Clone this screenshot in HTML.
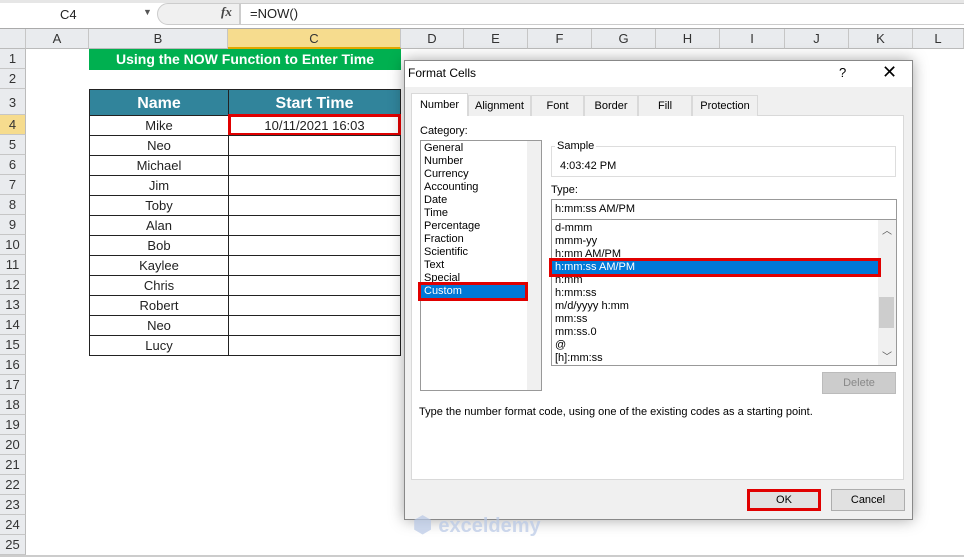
<!DOCTYPE html>
<html><head><meta charset="utf-8"><style>
*{margin:0;padding:0;box-sizing:border-box}
body{width:964px;height:557px;overflow:hidden;background:#fff;font-family:"Liberation Sans",sans-serif;position:relative;font-size:13px;color:#222}
.a{position:absolute}
.ch{position:absolute;top:29px;height:20px;background:#e9ebee;border-right:1px solid #c6c6c6;border-bottom:1px solid #bbb;text-align:center;line-height:20px;font-size:13px;color:#333}
.rh{position:absolute;left:0;width:26px;background:#e9ebee;border-bottom:1px solid #c6c6c6;border-right:1px solid #bbb;text-align:center;font-size:13px;color:#333}
.cell{position:absolute;border:1px solid #222;text-align:center;font-size:13px;line-height:19px}
.dlg{font-family:"Liberation Sans",sans-serif;font-size:11px;color:#000}
.tab{position:absolute;top:95px;height:21px;border:1px solid #d9d9d9;border-bottom:none;background:#f0f0f0;text-align:center;line-height:20px;font-size:11px}
.li{height:13px;line-height:13px;padding-left:3px;font-size:11px;white-space:nowrap}
</style></head><body>
<div class="a" style="left:0;top:0;width:964px;height:28px;background:#fff;border-bottom:1px solid #aaa"></div>
<div class="a" style="left:0;top:0;width:964px;height:3px;background:#e6e6e6"></div>
<div class="a" style="left:60px;top:7px;font-size:13px">C4</div>
<div class="a" style="left:143px;top:7px;font-size:9px;color:#555">▼</div>
<div class="a" style="left:157px;top:3px;width:83px;height:22px;background:#f0f0f0;border:1px solid #ccc;border-radius:11px 0 0 11px"></div>
<div class="a" style="left:221px;top:4px;font-family:'Liberation Serif',serif;font-style:italic;font-size:13px;font-weight:bold;color:#444">fx</div>
<div class="a" style="left:240px;top:3px;width:724px;height:22px;border:1px solid #ccc;border-right:none;background:#fff"></div>
<div class="a" style="left:250px;top:6px;font-size:13px">=NOW()</div>
<div class="a" style="left:0;top:25px;width:964px;height:4px;background:#fff;border-bottom:1px solid #aaa"></div>
<div class="ch" style="left:0;width:26px"></div>
<div class="ch" style="left:26px;width:63px">A</div>
<div class="ch" style="left:89px;width:139px">B</div>
<div class="ch" style="left:228px;width:173px;background:#f6dc8e;border-bottom:2px solid #e0a800">C</div>
<div class="ch" style="left:401px;width:63px">D</div>
<div class="ch" style="left:464px;width:64px">E</div>
<div class="ch" style="left:528px;width:64px">F</div>
<div class="ch" style="left:592px;width:64px">G</div>
<div class="ch" style="left:656px;width:64px">H</div>
<div class="ch" style="left:720px;width:65px">I</div>
<div class="ch" style="left:785px;width:64px">J</div>
<div class="ch" style="left:849px;width:64px">K</div>
<div class="ch" style="left:913px;width:51px">L</div>
<div class="rh" style="top:49px;height:20px;line-height:20px">1</div>
<div class="rh" style="top:69px;height:20px;line-height:20px">2</div>
<div class="rh" style="top:89px;height:26px;line-height:28px">3</div>
<div class="rh" style="top:115px;height:20px;line-height:20px;background:#f6dc8e">4</div>
<div class="rh" style="top:135px;height:20px;line-height:20px">5</div>
<div class="rh" style="top:155px;height:20px;line-height:20px">6</div>
<div class="rh" style="top:175px;height:20px;line-height:20px">7</div>
<div class="rh" style="top:195px;height:20px;line-height:20px">8</div>
<div class="rh" style="top:215px;height:20px;line-height:20px">9</div>
<div class="rh" style="top:235px;height:20px;line-height:20px">10</div>
<div class="rh" style="top:255px;height:20px;line-height:20px">11</div>
<div class="rh" style="top:275px;height:20px;line-height:20px">12</div>
<div class="rh" style="top:295px;height:20px;line-height:20px">13</div>
<div class="rh" style="top:315px;height:20px;line-height:20px">14</div>
<div class="rh" style="top:335px;height:20px;line-height:20px">15</div>
<div class="rh" style="top:355px;height:20px;line-height:20px">16</div>
<div class="rh" style="top:375px;height:20px;line-height:20px">17</div>
<div class="rh" style="top:395px;height:20px;line-height:20px">18</div>
<div class="rh" style="top:415px;height:20px;line-height:20px">19</div>
<div class="rh" style="top:435px;height:20px;line-height:20px">20</div>
<div class="rh" style="top:455px;height:20px;line-height:20px">21</div>
<div class="rh" style="top:475px;height:20px;line-height:20px">22</div>
<div class="rh" style="top:495px;height:20px;line-height:20px">23</div>
<div class="rh" style="top:515px;height:20px;line-height:20px">24</div>
<div class="rh" style="top:535px;height:20px;line-height:20px">25</div>
<div class="a" style="left:0;top:555px;width:964px;height:2px;background:#ccc"></div>
<div class="a" style="left:89px;top:49px;width:312px;height:21px;background:#00b050;color:#fff;font-weight:bold;font-size:14px;text-align:center;line-height:20px">Using the NOW Function to Enter Time</div>
<div class="cell" style="left:89px;top:89px;width:140px;height:27px;background:#31849b;color:#fff;font-weight:bold;font-size:16px;line-height:27px">Name</div>
<div class="cell" style="left:228px;top:89px;width:173px;height:27px;background:#31849b;color:#fff;font-weight:bold;font-size:16px;line-height:27px">Start Time</div>
<div class="cell" style="left:89px;top:115px;width:140px;height:21px">Mike</div>
<div class="cell" style="left:228px;top:115px;width:173px;height:21px">10/11/2021 16:03</div>
<div class="a" style="left:228px;top:114px;width:173px;height:22px;border:3px solid #e00000"></div>
<div class="cell" style="left:89px;top:135px;width:140px;height:21px">Neo</div><div class="cell" style="left:228px;top:135px;width:173px;height:21px"></div>
<div class="cell" style="left:89px;top:155px;width:140px;height:21px">Michael</div><div class="cell" style="left:228px;top:155px;width:173px;height:21px"></div>
<div class="cell" style="left:89px;top:175px;width:140px;height:21px">Jim</div><div class="cell" style="left:228px;top:175px;width:173px;height:21px"></div>
<div class="cell" style="left:89px;top:195px;width:140px;height:21px">Toby</div><div class="cell" style="left:228px;top:195px;width:173px;height:21px"></div>
<div class="cell" style="left:89px;top:215px;width:140px;height:21px">Alan</div><div class="cell" style="left:228px;top:215px;width:173px;height:21px"></div>
<div class="cell" style="left:89px;top:235px;width:140px;height:21px">Bob</div><div class="cell" style="left:228px;top:235px;width:173px;height:21px"></div>
<div class="cell" style="left:89px;top:255px;width:140px;height:21px">Kaylee</div><div class="cell" style="left:228px;top:255px;width:173px;height:21px"></div>
<div class="cell" style="left:89px;top:275px;width:140px;height:21px">Chris</div><div class="cell" style="left:228px;top:275px;width:173px;height:21px"></div>
<div class="cell" style="left:89px;top:295px;width:140px;height:21px">Robert</div><div class="cell" style="left:228px;top:295px;width:173px;height:21px"></div>
<div class="cell" style="left:89px;top:315px;width:140px;height:21px">Neo</div><div class="cell" style="left:228px;top:315px;width:173px;height:21px"></div>
<div class="cell" style="left:89px;top:335px;width:140px;height:21px">Lucy</div><div class="cell" style="left:228px;top:335px;width:173px;height:21px"></div>

<div class="a dlg" style="left:404px;top:60px;width:509px;height:460px;background:#f0f0f0;border:1px solid #888;box-shadow:0 0 14px rgba(0,0,0,.35)"></div>
<div class="a dlg" style="left:405px;top:61px;width:507px;height:26px;background:#fff"></div>
<div class="a dlg" style="left:408px;top:66px;font-size:12px">Format Cells</div>
<div class="a dlg" style="left:839px;top:65px;font-size:13px">?</div>
<div class="a dlg" style="left:882px;top:62px;font-size:18px;font-weight:300">✕</div>
<div class="a" style="left:411px;top:115px;width:493px;height:365px;background:#fff;border:1px solid #d9d9d9"></div>
<div class="tab dlg" style="left:411px;top:93px;width:57px;height:23px;background:#fff;border-color:#d9d9d9;line-height:23px">Number</div>
<div class="tab dlg" style="left:468px;width:63px">Alignment</div>
<div class="tab dlg" style="left:531px;width:53px">Font</div>
<div class="tab dlg" style="left:584px;width:54px">Border</div>
<div class="tab dlg" style="left:638px;width:54px">Fill</div>
<div class="tab dlg" style="left:692px;width:66px">Protection</div>
<div class="a dlg" style="left:420px;top:125px">Category:</div>
<div class="a" style="left:420px;top:140px;width:122px;height:251px;border:1px solid #999;background:#fff"></div>
<div class="a" style="left:527px;top:141px;width:14px;height:249px;background:#f0f0f0"></div>
<div class="a dlg" style="left:421px;top:142px;width:104px">
<div class="li">General</div><div class="li">Number</div><div class="li">Currency</div><div class="li">Accounting</div><div class="li">Date</div><div class="li">Time</div><div class="li">Percentage</div><div class="li">Fraction</div><div class="li">Scientific</div><div class="li">Text</div><div class="li">Special</div><div class="li" style="background:#0078d7;color:#fff;outline:3px solid #e00000">Custom</div>
</div>
<div class="a" style="left:551px;top:146px;width:345px;height:31px;border:1px solid #ddd"></div>
<div class="a dlg" style="left:555px;top:140px;background:#fff;padding:0 2px">Sample</div>
<div class="a dlg" style="left:560px;top:160px">4:03:42 PM</div>
<div class="a dlg" style="left:551px;top:184px">Type:</div>
<div class="a" style="left:551px;top:199px;width:346px;height:21px;border:1px solid #999;background:#fff"></div>
<div class="a dlg" style="left:555px;top:203px">h:mm:ss AM/PM</div>
<div class="a" style="left:551px;top:219px;width:346px;height:147px;border:1px solid #999;background:#fff"></div>
<div class="a" style="left:878px;top:220px;width:18px;height:145px;background:#f0f0f0"></div>
<div class="a" style="left:879px;top:297px;width:15px;height:31px;background:#cdcdcd"></div>
<div class="a" style="left:882px;top:222px;font-size:10px;color:#555">︿</div>
<div class="a" style="left:882px;top:348px;font-size:10px;color:#555">﹀</div>
<div class="a dlg" style="left:552px;top:222px;width:326px">
<div class="li">d-mmm</div><div class="li">mmm-yy</div><div class="li">h:mm AM/PM</div><div class="li" style="background:#0078d7;color:#fff;outline:3px solid #e00000">h:mm:ss AM/PM</div><div class="li">h:mm</div><div class="li">h:mm:ss</div><div class="li">m/d/yyyy h:mm</div><div class="li">mm:ss</div><div class="li">mm:ss.0</div><div class="li">@</div><div class="li">[h]:mm:ss</div>
</div>
<div class="a dlg" style="left:822px;top:372px;width:74px;height:22px;background:#ccc;border:1px solid #bbb;color:#888;text-align:center;line-height:20px">Delete</div>
<div class="a dlg" style="left:419px;top:406px">Type the number format code, using one of the existing codes as a starting point.</div>
<div class="a dlg" style="left:747px;top:489px;width:74px;height:22px;background:#e1e1e1;border:2px solid #0078d7;outline:3px solid #e00000;outline-offset:-3px;text-align:center;line-height:18px">OK</div>
<div class="a dlg" style="left:831px;top:489px;width:74px;height:22px;background:#e1e1e1;border:1px solid #adadad;text-align:center;line-height:20px">Cancel</div>
<div class="a" style="left:413px;top:512px;font-size:22px;font-weight:bold;color:#b8c8e6;opacity:.7">⬢ <span style="font-size:20px">exceldemy</span></div>
</body></html>
